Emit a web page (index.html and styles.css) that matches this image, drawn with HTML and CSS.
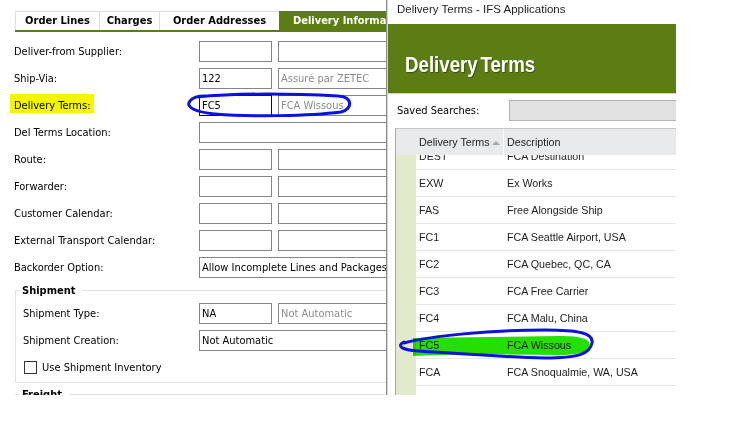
FILE: index.html
```html
<!DOCTYPE html>
<html lang="en">
<head>
  <meta charset="UTF-8">
  <title>Delivery Terms</title>
  <link rel="stylesheet" href="styles.css">
</head>
<body>
<div class="shot">
  <!-- customer order form, delivery tab -->
  <div class="form-panel">
    <div class="tabs">
      <div class="tab tab-lines">Order Lines</div>
      <div class="tab tab-charges">Charges</div>
      <div class="tab tab-addr">Order Addresses</div>
      <div class="tab active">Delivery Information</div>
    </div>
    <div class="fields">
      <div class="row"><label>Deliver-from Supplier:</label><input class="code" readonly><input class="desc" readonly></div>
      <div class="row"><label>Ship-Via:</label><input class="code" value="122" readonly><input class="desc" value="Assuré par ZETEC" readonly></div>
      <div class="row"><label><span class="hl">Delivery Terms:</span></label><input class="code focus" value="FC5" readonly><input class="desc" value="FCA Wissous" readonly></div>
      <div class="row"><label>Del Terms Location:</label><input class="wide" readonly></div>
      <div class="row"><label>Route:</label><input class="code" readonly><input class="desc" readonly></div>
      <div class="row"><label>Forwarder:</label><input class="code" readonly><input class="desc" readonly></div>
      <div class="row"><label>Customer Calendar:</label><input class="code" readonly><input class="desc" readonly></div>
      <div class="row"><label>External Transport Calendar:</label><input class="code" readonly><input class="desc" readonly></div>
      <div class="row"><label>Backorder Option:</label><input class="wide" value="Allow Incomplete Lines and Packages" readonly></div>

      <fieldset class="group">
        <legend>Shipment</legend>
        <div class="row"><label>Shipment Type:</label><input class="code" value="NA" readonly><input class="desc" value="Not Automatic" readonly></div>
        <div class="row"><label>Shipment Creation:</label><input class="wide" value="Not Automatic" readonly></div>
        <div class="check"><span class="box"></span>Use Shipment Inventory</div>
      </fieldset>

      <fieldset class="group next">
        <legend>Freight</legend>
        <div class="row"><label>Freight Map:</label><input class="code" readonly></div>
      </fieldset>
    </div>
  </div>

  <!-- lov dialog -->
  <div class="dialog">
    <div class="titlebar">Delivery Terms - IFS Applications</div>
    <div class="banner"><h1>Delivery Terms</h1></div>
    <div class="search">
      <span class="search-label">Saved Searches:</span>
      <div class="combo"></div>
    </div>
    <div class="grid">
      <div class="grid-head">
        <div class="sel"></div>
        <div class="h1">Delivery Terms<span class="sort"></span></div>
        <div class="h2">Description</div>
      </div>
      <div class="grid-body">
        <div class="sel-strip"></div>
        <div class="rows">
          <div class="r"><div class="c1">DEST</div><div class="c2">FCA Destination</div></div>
          <div class="r"><div class="c1">EXW</div><div class="c2">Ex Works</div></div>
          <div class="r"><div class="c1">FAS</div><div class="c2">Free Alongside Ship</div></div>
          <div class="r"><div class="c1">FC1</div><div class="c2">FCA Seattle Airport, USA</div></div>
          <div class="r"><div class="c1">FC2</div><div class="c2">FCA Quebec, QC, CA</div></div>
          <div class="r"><div class="c1">FC3</div><div class="c2">FCA Free Carrier</div></div>
          <div class="r"><div class="c1">FC4</div><div class="c2">FCA Malu, China</div></div>
          <div class="r"><div class="c1">FC5</div><div class="c2">FCA Wissous</div></div>
          <div class="r"><div class="c1">FCA</div><div class="c2">FCA Snoqualmie, WA, USA</div></div>
          <div class="r"><div class="c1"></div><div class="c2"></div></div>
        </div>
      </div>
    </div>
  </div>

  <!-- pen marks drawn over the screenshot -->
  <svg class="ink" width="747" height="395" viewBox="0 0 747 395">
    <path class="marker" d="M413 338 L560 336 C584 336 592 340 589 347 C587 353 575 355 560 355 L470 354 L413 356 Z"/>
    <path class="pen" d="M196 97 C240 93 300 94 338 96 C353 97 353 109 341 112 C310 116 250 117 215 114 C195 112 185 107 190 101 C192 98 198 96 205 96"/>
    <path class="pen" d="M404 343 C430 336 490 330 545 330 C578 330 594 333 592 343 C590 354 578 358 545 358 C500 357 450 353 418 351 C402 350 396 346 404 342"/>
  </svg>
</div>
</body>
</html>
```

FILE: styles.css
```css
body {
  margin: 0;
  background-color: #FFF;
  font-family: "DejaVu Sans Condensed", "Liberation Sans", sans-serif;
  font-size: 11px;
  color: #000;
}

.shot {
  position: relative;
  display: flex;
  width: 747px;
  height: 395px;
  overflow: hidden;
}

/* left form */

.form-panel {
  flex: none;
  width: 387px;
  box-sizing: border-box;
  padding-left: 14px;
  border-right: 1px solid #8C8C8C;
  overflow: hidden;
}

.tabs {
  display: flex;
  margin: 11px 0 0 1px;
  border-bottom: 2px solid #5B7D14;
  white-space: nowrap;
}

.tab {
  flex: none;
  box-sizing: border-box;
  line-height: 18px;
  text-align: center;
  border-top: 1px solid #DEDEDE;
  border-left: 1px solid #DEDEDE;
  font-weight: bold;
}

.tab-lines {
  width: 84px;
}

.tab-charges {
  width: 60px;
}

.tab-addr {
  width: 120px;
}

.tab.active {
  padding-left: 13px;
  text-align: left;
  background-color: #5B7D14;
  border-color: #5B7D14;
  color: #FFF;
}

.fields {
  margin-top: 9px;
}

.row {
  display: flex;
  align-items: center;
  height: 21px;
  margin-bottom: 6px;
  white-space: nowrap;
}

.row label {
  flex: none;
  width: 185px;
}

.row input {
  flex: none;
  box-sizing: border-box;
  height: 21px;
  margin: 0;
  padding: 0 2px;
  border: 1px solid #858585;
  border-radius: 0;
  background-color: #FFF;
  font: inherit;
  color: #000;
  outline: none;
}

.row .code {
  width: 73px;
}

.row .desc {
  width: 200px;
  margin-left: 6px;
  color: #8C8C8C;
}

.row .wide {
  width: 260px;
}

.row .focus {
  border-color: #111;
}

.hl {
  margin-left: -4px;
  padding: 5px 3px 1px 4px;
  background-color: #F5F500;
}

.group {
  width: 400px;
  min-width: 0;
  margin: 0 0 0 1px;
  padding: 6px 0 4px 7px;
  border: 1px solid #E3E3E3;
}

.group legend {
  margin-left: -3px;
  padding: 0 7px 0 2px;
  font-weight: bold;
}

.group .row label {
  width: 176px;
}

.group.next {
  margin-top: 5px;
}

.check {
  display: flex;
  align-items: center;
  height: 21px;
  margin-top: 2px;
}

.check .box {
  width: 13px;
  height: 13px;
  box-sizing: border-box;
  margin: 0 5px 0 1px;
  border: 1px solid #333;
  background-color: #FFF;
}

/* dialog */

.dialog {
  flex: none;
  width: 289px;
  box-sizing: border-box;
  border-left: 1px solid #D4D4D4;
  background-color: #FFF;
  font-family: "Liberation Sans", Arial, sans-serif;
  color: #1E1E1E;
}

.titlebar {
  height: 24px;
  padding-left: 9px;
  line-height: 18px;
  font-size: 11.5px;
}

.banner {
  height: 70px;
  padding: 30px 0 0 17px;
  box-sizing: border-box;
  background-color: #5B7D14;
  border-bottom: 1px solid #CFCFCF;
}

/* no narrow face installed, so squeeze the bold one */
.banner h1 {
  display: inline-block;
  margin: 0;
  font-size: 22px;
  line-height: 22px;
  font-weight: bold;
  color: #FFF;
  word-spacing: -3px;
  transform: scaleX(0.85);
  transform-origin: left top;
  text-shadow: 1px 1px 1px rgba(0, 0, 0, 0.35);
}

.search {
  display: flex;
  align-items: center;
  height: 21px;
  padding: 6px 0 0 9px;
}

.search-label {
  flex: none;
  width: 112px;
  font-family: "DejaVu Sans Condensed", "Liberation Sans", sans-serif;
  font-size: 11px;
  color: #000;
}

.combo {
  flex: 1;
  height: 21px;
  box-sizing: border-box;
  background-color: #E1E1E1;
  border: 1px solid #B3B3B3;
  border-right: none;
}

.grid {
  margin: 7px 0 0 7px;
  border-top: 1px solid #C6C6C6;
  border-left: 1px solid #A9A9A9;
  font-size: 10.7px;
}

.grid-head {
  display: flex;
  align-items: center;
  height: 26px;
  background-color: #E9EAEC;
  white-space: nowrap;
}

.grid-head .sel {
  width: 20px;
  flex: none;
}

.grid-head .h1 {
  width: 87px;
  flex: none;
  box-sizing: border-box;
  padding-left: 3px;
}

.grid-head .h2 {
  align-self: stretch;
  display: flex;
  align-items: center;
  padding-left: 3px;
  border-left: 1px solid #FAFAFA;
}

.sort {
  display: inline-block;
  margin-left: 3px;
  vertical-align: middle;
  border-left: 4px solid transparent;
  border-right: 4px solid transparent;
  border-bottom: 4px solid #A8A8A8;
}

.grid-body {
  display: flex;
  height: 240px;
  overflow: hidden;
}

.sel-strip {
  flex: none;
  width: 20px;
  background-color: #E1EBCB;
}

.rows {
  flex: 1;
  margin-top: -12px;
}

.r {
  display: flex;
  align-items: center;
  height: 27px;
  box-sizing: border-box;
  border-bottom: 1px solid #E6E6E6;
  white-space: nowrap;
}

.r .c1 {
  flex: none;
  width: 88px;
  box-sizing: border-box;
  padding-left: 3px;
}

.r .c2 {
  padding-left: 3px;
}

/* pen marks */

.ink {
  position: absolute;
  left: 0;
  top: 0;
  pointer-events: none;
}

.ink .marker {
  fill: #24DF00;
  mix-blend-mode: multiply;
}

.ink .pen {
  fill: none;
  stroke: #0B12D9;
  stroke-width: 3;
  stroke-linecap: round;
  stroke-linejoin: round;
}
```
